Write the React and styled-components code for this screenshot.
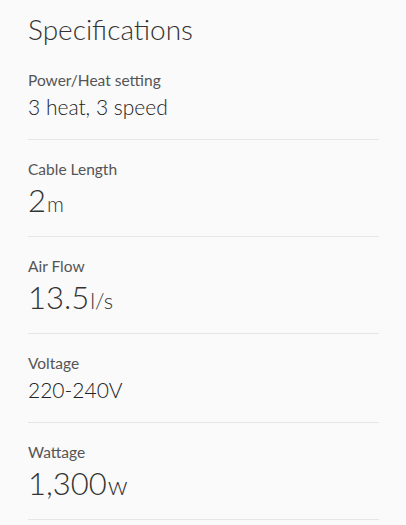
import styled, { createGlobalStyle } from 'styled-components';

const GlobalStyle = createGlobalStyle`
  html, body {
    margin: 0;
    padding: 0;
    background: #fafafa;
  }
  body {
    font-family: Lato, "Open Sans", "Liberation Sans", sans-serif;
    color: #333;
  }
`;

const Page = styled.div`
  padding: 12px 27px 0 28px;
  background: #fafafa;
  min-height: 525px;
  box-sizing: border-box;
`;

const Title = styled.h2`
  margin: 0 0 5px;
  font-size: 28px;
  line-height: 34px;
  font-weight: 300;
  color: #333;
`;

const List = styled.dl`
  margin: 0;
  padding: 0;
`;

const Item = styled.div`
  padding: 20px 0 20px;
  border-bottom: 1px solid #e6e6e6;
`;

const Label = styled.dt`
  margin: 0 0 6px;
  font-size: 15.5px;
  line-height: 18px;
  font-weight: 400;
  color: #555;
`;

const Value = styled.dd`
  margin: 0;
  font-size: ${(p) => (p.$big ? '31px' : '21px')};
  line-height: ${(p) => (p.$big ? '32px' : '24px')};
  font-weight: 300;
  color: ${(p) => (p.$big ? '#333' : '#222')};
  white-space: nowrap;
`;

const Unit = styled.span`
  font-size: ${(p) => p.$size || '20px'};
  line-height: 1;
  margin-left: 1px;
`;

const specs = [
  { label: 'Power/Heat setting', value: '3 heat, 3 speed' },
  { label: 'Cable Length', value: '2', unit: 'm', big: true, unitSize: '21px' },
  { label: 'Air Flow', value: '13.5', unit: 'l/s', big: true, unitSize: '22px' },
  { label: 'Voltage', value: '220-240V' },
  { label: 'Wattage', value: '1,300', unit: 'w', big: true, unitSize: '26px' },
];

function App() {
  return (
    <>
      <GlobalStyle />
      <Page>
        <Title>Specifications</Title>
        <List>
          {specs.map((s) => (
            <Item key={s.label}>
              <Label>{s.label}</Label>
              <Value $big={s.big}>
                {s.value}
                {s.unit && <Unit $size={s.unitSize}>{s.unit}</Unit>}
              </Value>
            </Item>
          ))}
        </List>
      </Page>
    </>
  );
}

export default App;
